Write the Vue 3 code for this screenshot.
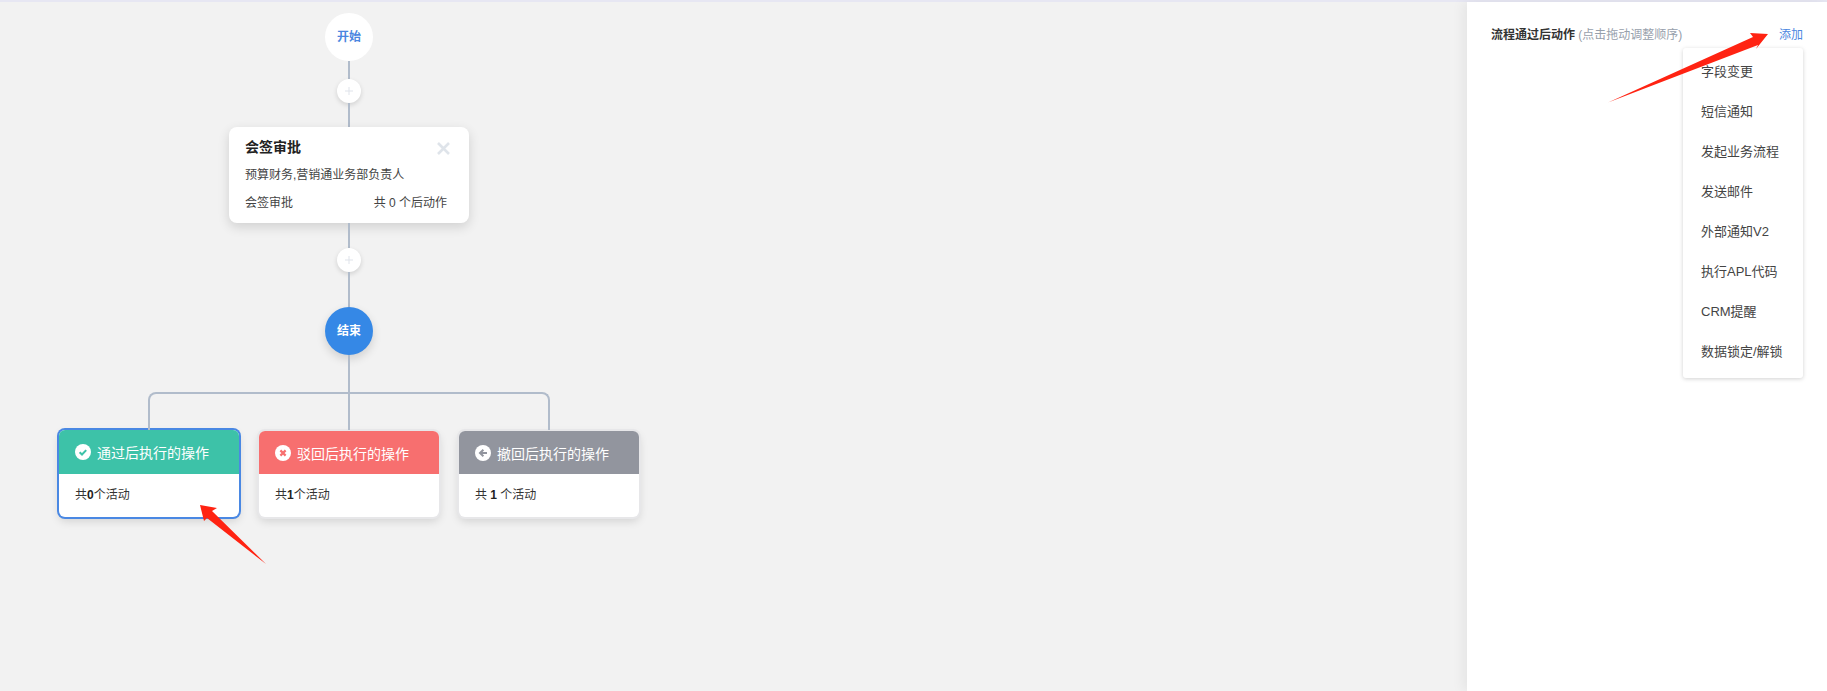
<script setup>
const items = ['字段变更', '短信通知', '发起业务流程', '发送邮件', '外部通知V2', '执行APL代码', 'CRM提醒', '数据锁定/解锁']
</script>

<template>
  <div class="page">
    <div class="strip"></div>
    <div class="main">
      <div class="canvas">
        <div class="flow">
          <div class="node start">开始</div>
          <div class="line h18"></div>
          <div class="plus"><svg width="10" height="10" viewBox="0 0 10 10"><path d="M5 1v8M1 5h8" stroke="#dfe3ea" stroke-width="1"/></svg></div>
          <div class="line h24"></div>
          <div class="approval">
            <div class="approval-head">
              <span class="approval-title">会签审批</span>
              <svg class="close" width="13" height="13" viewBox="0 0 13 13"><path d="M1 1l11 11M12 1L1 12" stroke="#dfe4ea" stroke-width="2.6"/></svg>
            </div>
            <div class="approval-desc">预算财务,营销通业务部负责人</div>
            <div class="approval-foot"><span>会签审批</span><span>共 0 个后动作</span></div>
          </div>
          <div class="line h25"></div>
          <div class="plus"><svg width="10" height="10" viewBox="0 0 10 10"><path d="M5 1v8M1 5h8" stroke="#dfe3ea" stroke-width="1"/></svg></div>
          <div class="line h35"></div>
          <div class="node end">结束</div>
          <div class="line h37"></div>
          <div class="branch"></div>
          <div class="cards">
            <div class="card selected">
              <div class="card-head green">
                <svg width="16" height="16" viewBox="0 0 16 16"><circle cx="8" cy="8" r="8" fill="#fff"/><path d="M4.6 8.2l2.4 2.3 4.2-4.4" fill="none" stroke="#3dc2a8" stroke-width="2"/></svg>
                <span>通过后执行的操作</span>
              </div>
              <div class="card-body">共<b>0</b>个活动</div>
            </div>
            <div class="card">
              <div class="card-head red">
                <svg width="16" height="16" viewBox="0 0 16 16"><circle cx="8" cy="8" r="8" fill="#fff"/><path d="M5.4 5.4l5.2 5.2M10.6 5.4l-5.2 5.2" fill="none" stroke="#f76f6f" stroke-width="2.2"/></svg>
                <span>驳回后执行的操作</span>
              </div>
              <div class="card-body">共<b>1</b>个活动</div>
            </div>
            <div class="card">
              <div class="card-head gray">
                <svg width="16" height="16" viewBox="0 0 16 16"><circle cx="8" cy="8" r="8" fill="#fff"/><path d="M12 8H6M8.4 4.8L5 8l3.4 3.2" fill="none" stroke="#92959e" stroke-width="2"/></svg>
                <span>撤回后执行的操作</span>
              </div>
              <div class="card-body">共 <b>1</b> 个活动</div>
            </div>
          </div>
        </div>
      </div>
      <aside class="panel">
        <div class="panel-head">
          <div class="panel-title"><b>流程通过后动作</b> <span>(点击拖动调整顺序)</span></div>
          <a class="add">添加</a>
        </div>
        <ul class="menu">
          <li v-for="item in items" :key="item">{{ item }}</li>
        </ul>
      </aside>
    </div>
    <svg class="arrows" width="1827" height="691" viewBox="0 0 1827 691">
      <polygon points="200,505 217,508 212,511 266,564 207,518 204,521" fill="#ff2312"/>
      <polygon points="1768,34 1750,33 1753,37 1608,102.5 1758,45 1756,49" fill="#ff2312"/>
    </svg>
  </div>
</template>

<style>
html, body { margin: 0; padding: 0; }
</style>

<style scoped>
.page {
  position: relative;
  height: 691px;
  display: flex;
  flex-direction: column;
  overflow: hidden;
  font-family: "Liberation Sans", "Noto Sans CJK SC", sans-serif;
  font-size: 12px;
  color: #333;
}
.strip { height: 2px; background: #e7e7f3; flex: none; }
.main { flex: 1; display: flex; min-height: 0; }
.canvas { flex: 1; background: #f2f2f2; padding: 11px 0 0 49px; }
.flow { width: 600px; display: flex; flex-direction: column; align-items: center; }
.node {
  width: 48px; height: 48px; border-radius: 50%; box-sizing: border-box; padding-bottom: 3px;
  display: flex; align-items: center; justify-content: center;
  font-weight: 700; font-size: 12px; flex: none;
}
.start { background: #fff; color: #4a86e0; }
.end { background: #3588e6; color: #fff; box-shadow: 0 4px 10px rgba(0,0,0,.14); }
.line { width: 2px; background: #b1bccb; flex: none; }
.h18 { height: 18px; }
.h24 { height: 24px; }
.h25 { height: 25px; }
.h35 { height: 35px; }
.h37 { height: 37px; }
.plus {
  width: 24px; height: 24px; border-radius: 50%; background: #fff; flex: none;
  display: flex; align-items: center; justify-content: center;
  box-shadow: 0 2px 5px rgba(0,0,0,.14);
}
.approval {
  width: 240px; height: 96px; box-sizing: border-box; flex: none;
  background: #fff; border-radius: 8px; padding: 8px 16px 0;
  box-shadow: 0 4px 12px rgba(0,0,0,.14);
}
.approval-head { display: flex; justify-content: space-between; align-items: center; height: 22px; }
.approval-title { font-size: 14px; font-weight: 700; color: #222; }
.close { margin: 4px 3px 0 0; }
.approval-desc { margin-top: 8px; height: 20px; line-height: 20px; color: #444; }
.approval-foot { margin-top: 8px; line-height: 20px; display: flex; justify-content: space-between; padding-right: 6px; color: #444; }
.branch {
  position: relative; flex: none;
  width: 402px; height: 38px; box-sizing: border-box;
  border: 2px solid #b1bccb; border-bottom: 0; border-radius: 8px 8px 0 0;
}
.branch::after {
  content: ""; position: absolute; left: 198px; top: 0; width: 2px; height: 36px; background: #b1bccb;
}
.cards { display: flex; gap: 20px; flex: none; }
.card {
  width: 180px; height: 86px; margin-top: 1px; background: #fff; border-radius: 6px; overflow: hidden;
  box-shadow: 0 0 0 2px #e7e7e9, 0 4px 10px rgba(0,0,0,.14);
}
.card.selected { height: 87px; margin-top: 0; box-shadow: 0 0 0 2px #4a88e3, 0 4px 10px rgba(0,0,0,.14); }
.card-head {
  height: 43px; display: flex; align-items: center; gap: 6px; padding-left: 16px;
  color: #fff; font-size: 14px;
}
.selected .card-head { height: 44px; }
.green { background: #3dc2a8; }
.red { background: #f76f6f; }
.gray { background: #92959e; }
.card-body { padding-left: 16px; line-height: 43px; height: 43px; color: #333; }
.card-body b { color: #222; }
.panel {
  width: 360px; flex: none; background: #fff; box-sizing: border-box;
  padding: 23px 24px 0; box-shadow: -4px 0 12px rgba(0,0,0,.06); position: relative;
}
.panel-head { display: flex; justify-content: space-between; align-items: center; height: 20px; line-height: 20px; }
.panel-title b { color: #333; }
.panel-title span { color: #97a0ab; }
.add { color: #4a86e0; }
.menu {
  list-style: none; margin: 3px 0 0 auto; padding: 4px 0 6px; width: 120px;
  background: #fff; border-radius: 3px;
  box-shadow: 0 1px 4px rgba(0,0,0,.18);
}
.menu li { height: 40px; line-height: 40px; padding-left: 18px; font-size: 13px; color: #444; }
.arrows { position: absolute; left: 0; top: 0; pointer-events: none; }
</style>
